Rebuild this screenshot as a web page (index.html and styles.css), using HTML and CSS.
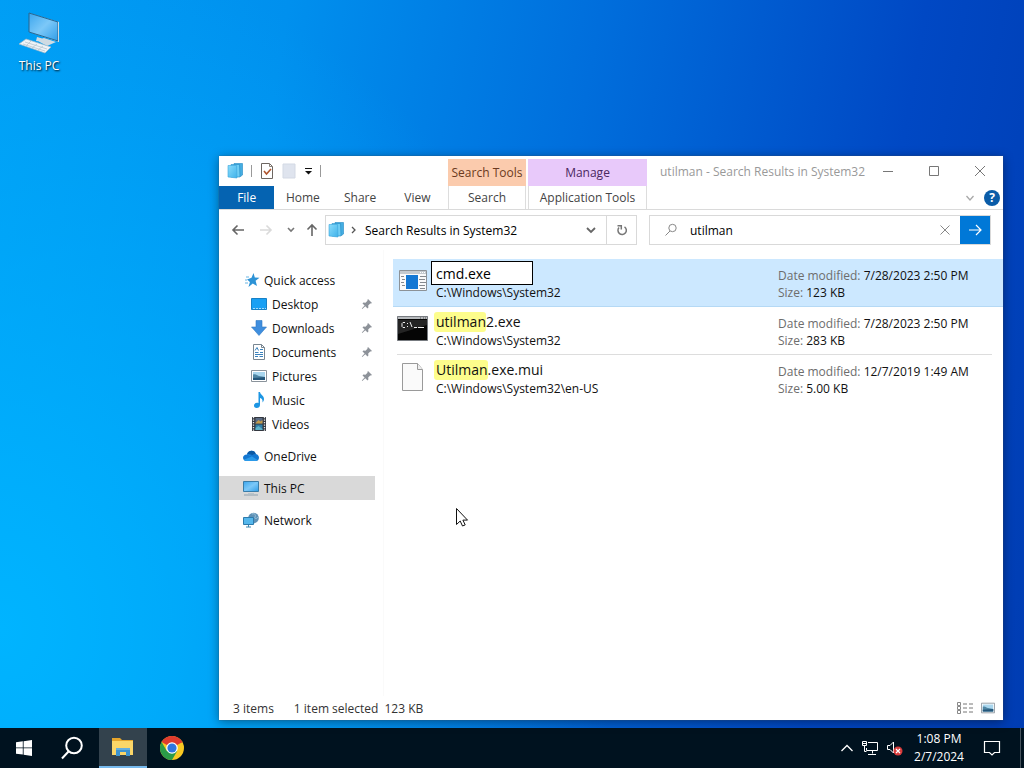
FILE: index.html
```html
<!DOCTYPE html>
<html lang="en">
<head>
    <meta charset="UTF-8">
    <meta name="viewport" content="width=device-width, initial-scale=1.0">
    <title>utilman - Search Results in System32</title>
    <link rel="stylesheet" href="styles.css">
</head>
<body>
    <!-- Shared icon shapes -->
    <svg class="defs" width="0" height="0">
        <defs>
            <linearGradient id="screen" x1="0" y1="0" x2="1" y2="1">
                <stop offset="0" stop-color="#3ba6ee"/>
                <stop offset="0.5" stop-color="#7cc8f8"/>
                <stop offset="1" stop-color="#2f9de8"/>
            </linearGradient>
            <linearGradient id="folder-blue" x1="0" y1="0" x2="1" y2="1">
                <stop offset="0" stop-color="#8adcfb"/>
                <stop offset="1" stop-color="#3fb2ea"/>
            </linearGradient>
        </defs>
        <symbol id="results" viewBox="0 0 16 16">
            <path d="M7 .5h8.500v11.500l-2 1.500H7z" fill="#45aee2" stroke="#2389c4" stroke-width=".6"/>
            <path d="M4 1.500h8.500l.5 12.500H4z" fill="#6fcdf4" stroke="#2389c4" stroke-width=".6"/>
            <path d="M1 2.500h8.500l.5 12.500-9-1z" fill="url(#folder-blue)" stroke="#3aa5dc" stroke-width=".6"/>
        </symbol>
        <symbol id="pin" viewBox="0 0 12 12">
            <path d="M7 1l4 4-1 .6-.8-.1-2 2 .2 2-.9.900L4.300 8.200 1.300 11l-.5-.4L3.600 7.500 1.500 5.500l.9-.9 2.100.2 2-2L6.400 2z" fill="#8d9299"/>
        </symbol>
        <symbol id="picture" viewBox="0 0 16 16">
            <path d="M.5 2.500h15v11H.5z" fill="#fff" stroke="#8a939b"/>
            <path d="M2 4h12v8H2z" fill="#a9d6ee"/>
            <path d="M2 6.500c3-1 4 1 6 1.500s4 .5 6 1V12H2z" fill="#4f86a4"/>
            <path d="M2 10l12-1v3H2z" fill="#24567a"/>
        </symbol>
    </svg>

    <main class="desktop">
        <a class="desktop-icon" href="#">
            <svg width="44" height="44" viewBox="0 0 44 44">
                <path d="M12 3l30 9v20L12 22z" fill="#d9eefa"/>
                <path d="M12 3l29 9v19L12 22z" fill="url(#screen)" stroke="#26648f"/>
                <path d="M41.500 12v20" stroke="#cfd8de"/>
                <path d="M20 27l7 2-1 3-7-1zM19 30l8-2 12 4-9 4z" fill="#cfdbe3"/>
                <path d="M2 34l7-5 25 8-6 6z" fill="#eef3f7" stroke="#9fb6c5" stroke-width=".7"/>
                <path d="M6 34l22 7M8 32l22 7M9 36l5-5M15 38l5-4M21 40l5-4" stroke="#b7c5cf" stroke-width=".8"/>
            </svg>
            <span>This PC</span>
        </a>

        <section class="window">
            <header class="ribbon">
                <div class="quick-tools">
                    <svg width="16" height="16"><use href="#results"/></svg>
                    <span class="divider"></span>
                    <button aria-label="Properties">
                        <svg width="14" height="16" viewBox="0 0 14 16">
                            <path d="M1.500.5h8l3 3v12h-11z" fill="#fff" stroke="#6d6661"/>
                            <path d="M9.500.5v3h3" fill="none" stroke="#8a827c"/>
                            <path d="M4 8l2.500 3L11 6" fill="none" stroke="#b0562f" stroke-width="1.600"/>
                        </svg>
                    </button>
                    <button aria-label="New folder">
                        <svg width="14" height="16" viewBox="0 0 14 16">
                            <path d="M1 1h12v14H1z" fill="#dfe4ee" stroke="#d3d9e4"/>
                        </svg>
                    </button>
                    <button aria-label="Customize toolbar">
                        <svg width="8" height="8" viewBox="0 0 8 8">
                            <path d="M1 1.500h7" stroke="#111"/>
                            <path d="M1 4h7L4.500 7.500z" fill="#111"/>
                        </svg>
                    </button>
                    <span class="divider"></span>
                </div>
                <div class="context search-context">Search Tools</div>
                <div class="context manage-context">Manage</div>
                <div class="title-bar">
                    <h1>utilman - Search Results in System32</h1>
                    <div class="window-buttons">
                        <button aria-label="Minimize"><svg width="12" height="12"><path d="M1 6.500h10"/></svg></button>
                        <button aria-label="Maximize"><svg width="12" height="12"><path d="M1.500 1.500h9v9h-9z"/></svg></button>
                        <button aria-label="Close"><svg width="12" height="12"><path d="M1 1l10 10M11 1L1 11"/></svg></button>
                    </div>
                </div>

                <nav class="tabs">
                    <button class="file-tab">File</button>
                    <button>Home</button>
                    <button>Share</button>
                    <button>View</button>
                </nav>
                <button class="context-tab">Search</button>
                <button class="context-tab">Application Tools</button>
                <div class="ribbon-end">
                    <button aria-label="Expand ribbon">
                        <svg width="10" height="10"><path d="M1.500 3l3.500 4 3.500-4" fill="none" stroke="#a8a8a8" stroke-width="1.300"/></svg>
                    </button>
                    <button class="help" aria-label="Help">?</button>
                </div>
            </header>

            <div class="nav-bar">
                <div class="arrows">
                    <button aria-label="Back"><svg width="14" height="14"><path d="M13 7H2M6.500 2.500L2 7l4.500 4.500" stroke="#666"/></svg></button>
                    <button aria-label="Forward"><svg width="14" height="14"><path d="M1 7h11M7.500 2.500L12 7l-4.500 4.500" stroke="#dadada"/></svg></button>
                    <button class="recent" aria-label="Recent locations"><svg width="8" height="8"><path d="M1 2l3 3 3-3" stroke="#777"/></svg></button>
                    <button class="up" aria-label="Up"><svg width="14" height="14"><path d="M7 13V2M2.500 6.500L7 2l4.500 4.500" stroke="#666"/></svg></button>
                </div>
                <div class="address">
                    <svg width="16" height="16"><use href="#results"/></svg>
                    <svg class="crumb" width="8" height="10"><path d="M2 2l3 3-3 3" fill="none" stroke="#555" stroke-width="1.300"/></svg>
                    <a href="#">Search Results in System32</a>
                    <button aria-label="Previous locations"><svg width="12" height="10"><path d="M2 3l4 4 4-4" fill="none" stroke="#666" stroke-width="1.800"/></svg></button>
                    <button class="refresh" aria-label="Refresh">
                        <svg width="14" height="14"><path d="M9.500 3.800A4.200 4.200 0 1 1 4 4.500M2.500 2.700h3.800v3.800" fill="none" stroke="#777" stroke-width="1.500"/></svg>
                    </button>
                </div>
                <div class="search">
                    <svg width="14" height="14"><circle cx="8.500" cy="5" r="3.700" fill="none" stroke="#888"/><path d="M6 8l-4.500 4.500" stroke="#888"/></svg>
                    <input type="text" value="utilman" aria-label="Search">
                    <button aria-label="Clear search"><svg width="12" height="12"><path d="M1.500 1.500l9 9M10.500 1.500l-9 9" stroke="#888"/></svg></button>
                    <button class="go" aria-label="Go"><svg width="16" height="16"><path d="M2 8h12M9 3l5 5-5 5" fill="none" stroke="#fff" stroke-width="1.200"/></svg></button>
                </div>
            </div>

            <div class="content">
                <nav class="sidebar">
                    <a href="#">
                        <svg width="16" height="16" viewBox="0 0 16 16">
                            <path d="M9.500 1l1.300 4.600 4.700.2-3.900 3 1.400 5.200-4.200-2.600L4.500 15l1.400-5L3 7.500l4.500-1.800z" fill="#2d93d6"/>
                            <path d="M2 5h3M1 8h2M1 11h3" stroke="#69b5e4"/>
                        </svg>
                        Quick access
                    </a>
                    <a class="child" href="#">
                        <svg width="16" height="16" viewBox="0 0 16 16">
                            <path d="M.5 2.500h15v11H.5z" fill="#18a0f4" stroke="#1781c6"/>
                            <path d="M2 12.500h13" stroke="#a7dcfb" stroke-dasharray="2 1"/>
                        </svg>
                        Desktop
                        <svg class="pin" width="12" height="12"><use href="#pin"/></svg>
                    </a>
                    <a class="child" href="#">
                        <svg width="16" height="16" viewBox="0 0 16 16"><path d="M5 .5h6V7h4.500L8 15.500.5 7H5z" fill="#3f8ede" stroke="#2f79c3" stroke-width=".6"/></svg>
                        Downloads
                        <svg class="pin" width="12" height="12"><use href="#pin"/></svg>
                    </a>
                    <a class="child" href="#">
                        <svg width="16" height="16" viewBox="0 0 16 16">
                            <path d="M2.500.5h8l3 3v12h-11z" fill="#fff" stroke="#788691"/>
                            <path d="M10.500.5v3h3" fill="none" stroke="#788691"/>
                            <path d="M4 6.500l2-3 1.500 3M9 5.500h3M4 8.500h3.500M9 8.500h3M4 10.500h8M4 12.500h3M8.500 12.500H12" fill="none" stroke="#3a82bd"/>
                        </svg>
                        Documents
                        <svg class="pin" width="12" height="12"><use href="#pin"/></svg>
                    </a>
                    <a class="child" href="#">
                        <svg width="16" height="16"><use href="#picture"/></svg>
                        Pictures
                        <svg class="pin" width="12" height="12"><use href="#pin"/></svg>
                    </a>
                    <a class="child" href="#">
                        <svg width="16" height="16" viewBox="0 0 16 16">
                            <path d="M7.500 0H9c.3 3 4 3.500 4 7 0 1.500-.7 2.500-1.500 3.500.4-2.500-.5-4-2.500-4.500v7c0 1.700-1.500 3-3.300 3S3 15 3 13.500s1.300-2.700 3-2.700c.6 0 1 .1 1.500.3z" fill="#1d96e3"/>
                        </svg>
                        Music
                    </a>
                    <a class="child" href="#">
                        <svg width="16" height="16" viewBox="0 0 16 16">
                            <path d="M1 1h14v14H1z" fill="#33373f"/>
                            <path d="M2.500 1v14M13.500 1v14" stroke="#e8eaec" stroke-width="1.300" stroke-dasharray="1.300 1.200"/>
                            <path d="M4.500 2h7v5.500h-7z" fill="#5a6b83"/>
                            <path d="M4.500 7l3-3 2 1.500L11.500 4v3.500h-7z" fill="#c39b4a"/>
                            <path d="M4.500 8.500h7V14h-7z" fill="#2f7fa8"/>
                            <path d="M4.500 12l3-2 4 3v1h-7z" fill="#5fb3c9"/>
                        </svg>
                        Videos
                    </a>
                    <a class="root" href="#">
                        <svg width="16" height="16" viewBox="0 0 16 16">
                            <path d="M4 6.500C4.500 4 6.500 2.800 8.500 2.800c2.200 0 3.700 1.200 4.300 3.200C15 6.500 16 8 16 9.700c0 2-1.400 3.300-3.300 3.300H3.500C1.500 13 0 11.700 0 9.800c0-1.900 1.700-3.400 4-3.300z" fill="#1477d1"/>
                            <path d="M4 6.500c2 0 3 .8 5.500 2.200L14.700 12c-.5.600-1.200 1-2 1H3.500c-1.200 0-2.200-.5-2.900-1.300L9 8.500" fill="#2b9ae9"/>
                            <path d="M4.200 6c.8-2.300 2.500-3.200 4.300-3.200 2.200 0 3.700 1.200 4.300 3.200-1.600-.1-2.600.4-3.600 1.100C7.500 6 6 5.700 4.200 6z" fill="#0c59a4"/>
                        </svg>
                        OneDrive
                    </a>
                    <a class="root selected" href="#">
                        <svg width="16" height="16" viewBox="0 0 16 16">
                            <path d="M.5 1.500h15v10H.5z" fill="url(#screen)" stroke="#3a7ca8"/>
                            <path d="M5 13.500h6" stroke="#b8c4cc"/>
                            <path d="M1 15h14" stroke="#8da0ad"/>
                        </svg>
                        This PC
                    </a>
                    <a class="root" href="#">
                        <svg width="16" height="16" viewBox="0 0 16 16">
                            <circle cx="10.500" cy="6" r="5.300" fill="#5f91b5"/>
                            <path d="M9 2c3-1 4 1 3 3s2 2 3 0" fill="none" stroke="#9cc4dc"/>
                            <path d="M.5 5.500h10v7H.5z" fill="#55b7ec" stroke="#2c7bad"/>
                            <path d="M3 15h5M5.500 13v2" stroke="#3f86b0"/>
                        </svg>
                        Network
                    </a>
                </nav>

                <ul class="files">
                    <li class="selected">
                        <svg width="32" height="32" viewBox="0 0 32 32">
                            <path d="M2.500 6.500h27v20h-27z" fill="#fafafa" stroke="#8c9297"/>
                            <path d="M3 7h26v3H3z" fill="#c4cacf"/>
                            <path d="M9 11h12v14H9z" fill="#1478d4"/>
                            <path d="M4 12.500h3M5 15.500h3M4 18.500h3M5 21.500h3M23 12.500h6M22 15.500h6M23 18.500h6M22 21.500h6M23 24.500h5" stroke="#85898e"/>
                            <path d="M23 8.500h1M25 8.500h1M27 8.500h1" stroke="#fff"/>
                        </svg>
                        <div class="name">
                            <input type="text" value="cmd.exe" aria-label="File name">
                            <div>C:\Windows\System32</div>
                        </div>
                        <div class="details">
                            <div><span>Date modified:</span> 7/28/2023 2:50 PM</div>
                            <div><span>Size:</span> 123 KB</div>
                        </div>
                    </li>
                    <li>
                        <svg width="32" height="32" viewBox="0 0 32 32">
                            <path d="M.5 4.500h30v24H.5z" fill="#050505" stroke="#777b80"/>
                            <path d="M1 5h29v2H1z" fill="#b7babd"/>
                            <path d="M1 8h29v5L1 22z" fill="#242424"/>
                            <path d="M8 10.500H6l-1 1v3l1 1h2M10.500 11v1M10.500 14v1M13 10l2 5M17 15.500h3M21 15.500h6" fill="none" stroke="#f0f0f0"/>
                            <path d="M23 6h1M26 6h1M28 6h1" stroke="#555"/>
                        </svg>
                        <div class="name">
                            <strong><mark>utilman</mark>2.exe</strong>
                            <div>C:\Windows\System32</div>
                        </div>
                        <div class="details">
                            <div><span>Date modified:</span> 7/28/2023 2:50 PM</div>
                            <div><span>Size:</span> 283 KB</div>
                        </div>
                    </li>
                    <li>
                        <svg width="32" height="32" viewBox="0 0 32 32">
                            <path d="M5.500 3.500h15l5 6v21h-20z" fill="#fafafa" stroke="#9a9a9a"/>
                            <path d="M20.500 3.500v6h5" fill="#eee" stroke="#9a9a9a"/>
                        </svg>
                        <div class="name">
                            <strong><mark>Utilman</mark>.exe.mui</strong>
                            <div>C:\Windows\System32\en-US</div>
                        </div>
                        <div class="details">
                            <div><span>Date modified:</span> 12/7/2019 1:49 AM</div>
                            <div><span>Size:</span> 5.00 KB</div>
                        </div>
                    </li>
                </ul>
            </div>

            <footer class="status-bar">
                <span class="count">3 items</span>
                <span>1 item selected</span>
                <span>123 KB</span>
                <div class="views">
                    <button aria-label="Details view">
                        <svg width="16" height="14">
                            <path d="M.5 1.500h3v3h-3zM.5 5.500h3v3h-3zM.5 9.500h3v3h-3z" fill="#fff" stroke="#888"/>
                            <path d="M6 3h10M6 7h10M6 11h10" stroke="#777" stroke-dasharray="4 2"/>
                        </svg>
                    </button>
                    <button aria-label="Thumbnail view"><svg width="14" height="14"><use href="#picture"/></svg></button>
                </div>
            </footer>
        </section>

        <svg class="cursor" width="14" height="21" viewBox="0 0 14 21">
            <path d="M1.500 1.500v16l3.700-3.500L7.500 19l2.700-1.100-2.300-4.800h4.600z" fill="#fff" stroke="#111"/>
        </svg>
    </main>

    <footer class="taskbar">
        <button aria-label="Start">
            <svg width="16" height="16" viewBox="0 0 16 16"><path d="M0 2.300L6.800 1.300v6.200H0zM7.600 1.200L16 0v7.500H7.600zM0 8.300h6.800v6.300L0 13.700zM7.600 8.300H16V16l-8.400-1.200z" fill="#fff"/></svg>
        </button>
        <button aria-label="Search">
            <svg width="24" height="24" viewBox="0 0 24 24" fill="none" stroke="#fff" stroke-width="2"><circle cx="14" cy="9.500" r="7.800"/><path d="M8.500 15.500L2 22.500"/></svg>
        </button>
        <button class="active" aria-label="File Explorer">
            <svg width="24" height="22" viewBox="0 0 24 22">
                <path d="M1 2h8l2 2h11v4H1z" fill="#e5a52c"/>
                <path d="M1 5h21v14H1z" fill="#fbd668"/>
                <path d="M5 12h14v8h-4v-4H9v4H5z" fill="#3d93cf"/>
                <path d="M5 12h14v2H5z" fill="#65aedd"/>
            </svg>
        </button>
        <button aria-label="Chrome">
            <svg width="24" height="24" viewBox="0 0 24 24">
                <circle cx="12" cy="12" r="12" fill="#f9c922"/>
                <path d="M12 12L1.600 6A12 12 0 0 1 22.400 6z" fill="#df3b2e"/>
                <path d="M1.600 6A12 12 0 0 0 12 24l5.200-9L12 12 6.800 15z" fill="#2b9b48"/>
                <path d="M12 6.500h10.600A12 12 0 0 0 22.400 6L12 5z" fill="#df3b2e"/>
                <circle cx="12" cy="12" r="5.800" fill="#fff"/>
                <circle cx="12" cy="12" r="4.600" fill="#2f76e0"/>
            </svg>
        </button>

        <div class="tray">
            <button aria-label="Show hidden icons"><svg width="14" height="10"><path d="M1.500 8L7 2.500 12.500 8" fill="none" stroke="#fff" stroke-width="1.300"/></svg></button>
            <button aria-label="Network">
                <svg width="18" height="16" fill="none" stroke="#fff"><path d="M7 2.500h9.500v8H5.500V8M11.500 10.500v3M7 14.500h8M1.500 1.500h4v4h-4zM3.500 5.500v6h2M2 3.500h3"/></svg>
            </button>
            <button aria-label="Volume muted">
                <svg width="18" height="16">
                    <path d="M1.500 5.500H4L7.500 2v11L4 9.500H1.500z" fill="none" stroke="#fff"/>
                    <circle cx="12" cy="11" r="4.500" fill="#d93c3c"/>
                    <path d="M10 9l4 4M14 9l-4 4" stroke="#fff" stroke-width="1.200"/>
                </svg>
            </button>
            <button class="clock">1:08 PM<br>2/7/2024</button>
            <button class="notifications" aria-label="Notifications">
                <svg width="18" height="18"><path d="M1.500 2.500h15v11h-5L9 16l-2.500-2.500h-5z" fill="none" stroke="#fff" stroke-width="1.200"/></svg>
            </button>
        </div>
    </footer>
</body>
</html>
```

FILE: styles.css
```css
* {
    box-sizing: border-box;
}

body {
    display: flex;
    flex-direction: column;
    height: 100vh;
    margin: 0;
    overflow: hidden;
    color: #111;
    font-family: "Open Sans", "Noto Sans", sans-serif;
    font-size: 12px;
    line-height: 17px;
    background:
        radial-gradient(ellipse 60% 90% at 0% 82%, #00b4ff 0%, rgba(0, 180, 255, 0) 100%),
        linear-gradient(100deg, #009cf4 0%, #0090ee 25%, #006edc 52%, #0048c4 80%, #003cb2 100%);
}

svg {
    display: block;
    flex: none;
}

button {
    display: flex;
    align-items: center;
    justify-content: center;
    padding: 0;
    border: none;
    background: none;
    color: inherit;
    font: inherit;
}

input {
    min-width: 0;
    border: none;
    outline: none;
    color: #000;
    font: inherit;
}

a {
    color: inherit;
    text-decoration: none;
}

.defs {
    position: absolute;
}

.desktop {
    position: relative;
    flex: 1;
}

.desktop-icon {
    display: flex;
    flex-direction: column;
    align-items: center;
    width: 78px;
    padding-top: 10px;
    color: #fff;
    text-shadow: 1px 1px 2px #000;
}

.desktop-icon span {
    margin-top: 3px;
}

/* Explorer window */
.window {
    position: absolute;
    top: 156px;
    right: 21px;
    bottom: 8px;
    left: 219px;
    display: flex;
    flex-direction: column;
    background-color: #fff;
    box-shadow: 0 0 1px #456, 0 2px 10px rgba(0, 0, 0, 0.4);
}

.ribbon {
    display: grid;
    grid-template-columns: 227px 78px 119px 1fr;
    grid-template-rows: 30px 23px;
    column-gap: 2px;
    border-bottom: 1px solid #dadada;
}

.quick-tools {
    display: flex;
    align-items: center;
    gap: 8px;
    padding-left: 8px;
}

.divider {
    width: 1px;
    height: 12px;
    background-color: #999;
}

.context {
    margin-top: 3px;
    padding-top: 5px;
    text-align: center;
    white-space: nowrap;
}

.search-context {
    background-color: #fbcbad;
    color: #6b3a20;
}

.manage-context {
    background-color: #e8c9fa;
    color: #4a2860;
}

.title-bar {
    display: flex;
    align-items: center;
    justify-content: space-between;
    padding-left: 11px;
    color: #999;
}

.title-bar h1 {
    margin: 0;
    font-size: 12px;
    font-weight: normal;
    white-space: nowrap;
}

.window-buttons {
    display: flex;
}

.window-buttons button {
    width: 46px;
    height: 28px;
}

.window-buttons path {
    fill: none;
    stroke: #777;
}

.tabs {
    display: flex;
    color: #444;
}

.tabs button {
    width: 58px;
}

.tabs .file-tab {
    width: 56px;
    background-color: #0563b1;
    color: #fff;
}

.context-tab {
    border-right: 1px solid #ddd;
    border-left: 1px solid #ddd;
    color: #444;
}

.ribbon-end {
    display: flex;
    align-items: center;
    justify-content: flex-end;
    gap: 9px;
    padding-right: 3px;
}

.help {
    width: 16px;
    height: 16px;
    border-radius: 50%;
    background-color: #0a5ca8;
    color: #fff;
    font-weight: bold;
}

/* Navigation and search */
.nav-bar {
    display: grid;
    grid-template-columns: 106px 312fr 12px 342fr;
    align-items: center;
    height: 40px;
    padding-right: 12px;
}

.arrows {
    display: flex;
    align-items: center;
    gap: 14px;
    padding-left: 12px;
}

.arrows path {
    fill: none;
    stroke-width: 1.6;
}

.arrows .up {
    margin-left: -4px;
}

.address,
.search {
    display: flex;
    align-items: center;
    height: 30px;
    border: 1px solid #d9d9d9;
}

.address {
    padding-left: 2px;
}

.crumb {
    margin: 0 7px 0 6px;
}

.address a {
    flex: 1;
    color: #000;
    white-space: nowrap;
}

.address button {
    width: 30px;
    height: 28px;
}

.address .refresh {
    border-left: 1px solid #d9d9d9;
}

.search {
    grid-column: 4;
    padding-left: 14px;
}

.search input {
    flex: 1;
    margin-left: 12px;
    padding: 0;
}

.search button {
    width: 30px;
    height: 28px;
}

.search .go {
    background-color: #0078d7;
}

/* Sidebar and results */
.content {
    display: flex;
    flex: 1;
}

.sidebar {
    width: 165px;
    padding-top: 18px;
    border-right: 1px solid #fafafa;
}

.sidebar a {
    display: flex;
    align-items: center;
    gap: 4px;
    height: 24px;
    margin-right: 8px;
    padding-left: 25px;
}

.sidebar .child {
    gap: 5px;
    padding-left: 32px;
}

.sidebar .root {
    gap: 5px;
    margin-top: 8px;
    padding-left: 24px;
}

.sidebar .selected {
    background-color: #d9d9d9;
}

.sidebar .pin {
    margin-right: 2px;
    margin-left: auto;
}

.files {
    flex: 1;
    margin: 0;
    padding: 9px 0 0 9px;
    list-style: none;
}

.files li {
    display: flex;
    height: 48px;
    margin-right: 11px;
    padding: 5px 0 0 4px;
}

.files li.selected {
    margin-right: 0;
    padding-right: 11px;
    background-color: #cce8ff;
    border-bottom: 1px solid #b5d9f5;
}

.files li:nth-child(2) {
    background: linear-gradient(#ddd, #ddd) 4px 100% / 100% 1px no-repeat;
}

.name {
    flex: 1;
    padding-left: 7px;
}

.name strong {
    display: block;
    height: 20px;
    font-size: 14px;
    font-weight: normal;
    line-height: 19px;
}

.name mark {
    margin-left: -2px;
    padding: 0 0 1px 2px;
    border-radius: 3px;
    background-color: #fdfd8c;
    color: inherit;
}

.name input {
    display: block;
    width: 102px;
    height: 24px;
    margin: -3px 0 -1px -5px;
    padding: 0 4px;
    border: 1px solid #000;
    background-color: #fff;
    font-size: 14px;
}

.details {
    width: 214px;
    padding-top: 3px;
    white-space: nowrap;
}

.details span {
    color: #6d6d6d;
}

.status-bar {
    display: flex;
    align-items: center;
    gap: 6px;
    height: 24px;
    padding: 0 8px 0 14px;
    color: #333;
}

.count {
    margin-right: 14px;
}

.views {
    display: flex;
    gap: 8px;
    margin-left: auto;
}

.cursor {
    position: absolute;
    top: 507px;
    left: 455px;
}

/* Taskbar */
.taskbar {
    display: flex;
    height: 40px;
    background-color: #00121f;
    color: #fff;
}

.taskbar > button {
    width: 48px;
}

.taskbar .active {
    margin: 0 1px 0 3px;
    border-bottom: 2px solid #76b9ed;
    background-color: #33424d;
}

.tray {
    display: flex;
    gap: 7px;
    margin-right: 3px;
    margin-left: auto;
    border-right: 1px solid #46535d;
}

.clock {
    width: 56px;
    line-height: 18px;
}

.notifications {
    width: 46px;
    padding-right: 10px;
}
```
